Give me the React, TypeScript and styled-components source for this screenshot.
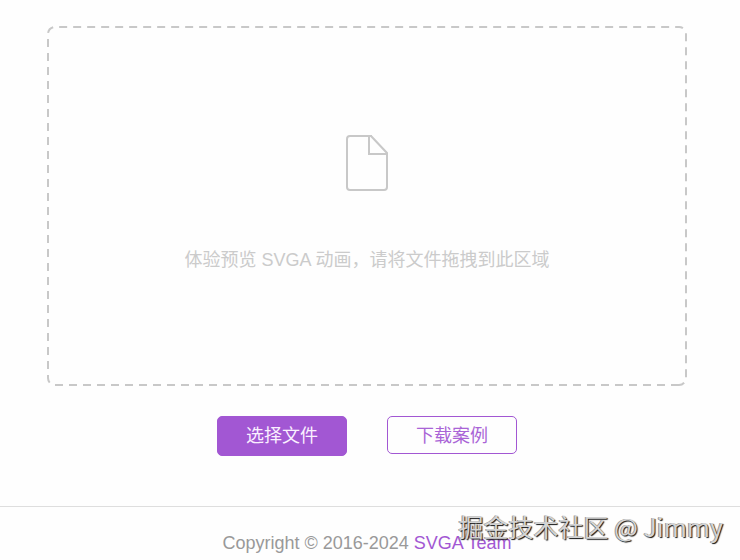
import React from "react";
import styled, { createGlobalStyle } from "styled-components";

const GlobalStyle = createGlobalStyle`
  * { box-sizing: border-box; }
  body {
    margin: 0;
    background: #fefefe;
    font-family: "Liberation Sans", "Noto Sans CJK SC", sans-serif;
    font-size: 18px;
    line-height: 24px;
  }
`;

const Page = styled.div`
  position: relative;
  min-height: 100vh;
  overflow: hidden;
`;

const Main = styled.main`
  padding: 26px 53px 50px 47px;
`;

const DropZone = styled.section`
  position: relative;
  display: flex;
  flex-direction: column;
  align-items: center;
  gap: 57px;
  padding: 109px 16px 114px;
  color: #cbcbcb;
`;

const DashedOutline = styled.svg`
  position: absolute;
  inset: 0;
  width: 100%;
  height: 100%;
  transform: rotate(180deg);
  pointer-events: none;

  rect {
    width: calc(100% - 2px);
    height: calc(100% - 2px);
  }
`;

const FileIcon = styled.svg`
  display: block;
`;

const Hint = styled.p`
  margin: 0;
  text-align: center;
`;

const Actions = styled.div`
  display: flex;
  justify-content: center;
  align-items: flex-start;
  gap: 40px;
  margin-top: 30px;
`;

const Button = styled.button<{ $primary?: boolean }>`
  width: 130px;
  height: ${(p) => (p.$primary ? 40 : 38)}px;
  padding: ${(p) => (p.$primary ? "0" : "2px 0 0")};
  border: 1px solid #a257d3;
  border-radius: 5px;
  background: ${(p) => (p.$primary ? "#a257d3" : "#fefefe")};
  color: ${(p) => (p.$primary ? "#faf0ff" : "#a964d6")};
  font: inherit;
  cursor: pointer;
`;

const Footer = styled.footer`
  padding: 24px 53px 4px 47px;
  border-top: 1px solid #dedede;
  color: #999999;
  text-align: center;
`;

const TeamLink = styled.a`
  color: #a257d3;
  text-decoration: none;
`;

const Watermark = styled.div`
  position: absolute;
  right: 17px;
  bottom: 16px;
  color: #d4d4d4;
  font-family: "Noto Sans CJK SC", sans-serif;
  font-size: 25px;
  line-height: 36px;
  white-space: nowrap;
  text-shadow: 1px 1px 1px #111111, -1px 0 0 #999999;
  pointer-events: none;
`;

export default function App() {
  return (
    <>
      <GlobalStyle />
      <Page>
        <Main>
          <DropZone>
            <DashedOutline aria-hidden="true">
              <rect x="1" y="1" rx="7" fill="none" stroke="#c8c8c8" strokeWidth="2" strokeDasharray="8 6" />
            </DashedOutline>
            <FileIcon width="42" height="56" viewBox="0 0 42 56" fill="none" stroke="#c8c8c8" strokeWidth="2" aria-hidden="true">
              <path d="M26 1H4a3 3 0 0 0-3 3v48a3 3 0 0 0 3 3h34a3 3 0 0 0 3-3V18L25 1" />
              <path d="M23 1v18h18" />
            </FileIcon>
            <Hint>体验预览 SVGA 动画，请将文件拖拽到此区域</Hint>
          </DropZone>
          <Actions>
            <Button type="button" $primary>选择文件</Button>
            <Button type="button">下载案例</Button>
          </Actions>
        </Main>
        <Footer>
          Copyright © 2016-2024 <TeamLink href="#team">SVGA Team</TeamLink>
        </Footer>
        <Watermark>掘金技术社区 @ Jimmy</Watermark>
      </Page>
    </>
  );
}
